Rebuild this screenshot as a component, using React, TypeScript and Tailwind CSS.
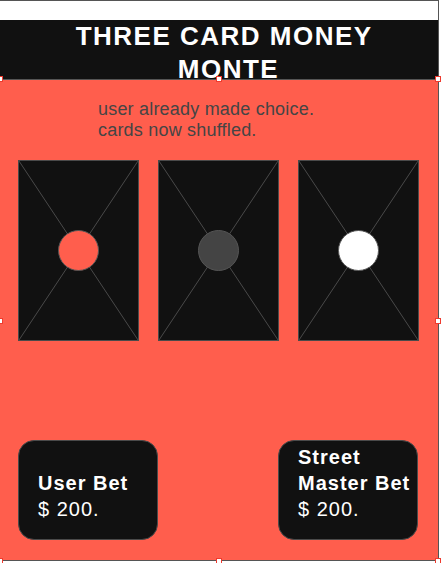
import React from 'react';

const RED = '#ff5e4d';

type CardProps = { dot: string };

// one face-down card: diagonals with a dot in the middle
const Card: React.FC<CardProps> = ({ dot }) => (
  <div className="w-[121px] h-[181px] bg-[#111111] border border-[#4a4a4a]">
    <svg width="119" height="179" viewBox="0 0 119 179" className="block">
      <line x1="0" y1="0" x2="119" y2="179" stroke="#4a4a4a" strokeWidth="1" />
      <line x1="119" y1="0" x2="0" y2="179" stroke="#4a4a4a" strokeWidth="1" />
      <circle cx="59.5" cy="89.5" r="20" fill={dot} stroke="#555555" strokeWidth="1" />
    </svg>
  </div>
);

const Handle: React.FC<{ className: string }> = ({ className }) => (
  <div className={`absolute w-[6px] h-[6px] bg-white border border-[#ee3b2f] ${className}`} />
);

const BetBox: React.FC<{ title: string }> = ({ title }) => (
  <div className="w-[140px] h-[100px] rounded-[16px] bg-[#111111] border border-[#4a4a4a] flex flex-col justify-end pl-[19px] pb-[17px] text-white text-[20px] leading-[26px] tracking-[1px]">
    <p className="font-bold">{title}</p>
    <p>$ 200.</p>
  </div>
);

export default function App() {
  return (
    <div className="relative w-[441px] h-[563px] bg-white overflow-hidden font-['Liberation_Sans',Arial,sans-serif]">
      <div className="w-[439px] border-t border-r border-[#555555] bg-white">
        <div className="h-[19px]" />

        {/* title bar */}
        <div className="h-[59px] bg-[#111111] overflow-hidden">
          <h1 className="pl-[19px] text-center text-white font-bold text-[26px] leading-[33px] tracking-[1.5px]">
            THREE CARD MONEY{'\u00a0'}
            <br />
            MONTE
          </h1>
        </div>

        {/* table */}
        <div className="h-[482px] border-y border-[#555555] bg-[#ff5e4d] px-[18px] pt-[19px]">
          <p className="pl-[80px] text-[18px] leading-[21px] tracking-[0.2px] text-[#454545]">
            user already made choice.
            <br />
            cards now shuffled.
          </p>

          <div className="mt-[19px] flex gap-[19px]">
            <Card dot={RED} />
            <Card dot="#444444" />
            <Card dot="#ffffff" />
          </div>

          <div className="mt-[99px] flex gap-[120px]">
            <BetBox title="User Bet" />
            <BetBox title="Street Master Bet" />
          </div>
        </div>
      </div>

      {/* selection handles */}
      <Handle className="left-[-3px] top-[76px]" />
      <Handle className="left-[216px] top-[76px]" />
      <Handle className="left-[435px] top-[76px]" />
      <Handle className="left-[-3px] top-[318px]" />
      <Handle className="left-[435px] top-[318px]" />
      <Handle className="left-[-3px] top-[558px]" />
      <Handle className="left-[216px] top-[558px]" />
      <Handle className="left-[435px] top-[558px]" />
    </div>
  );
}
